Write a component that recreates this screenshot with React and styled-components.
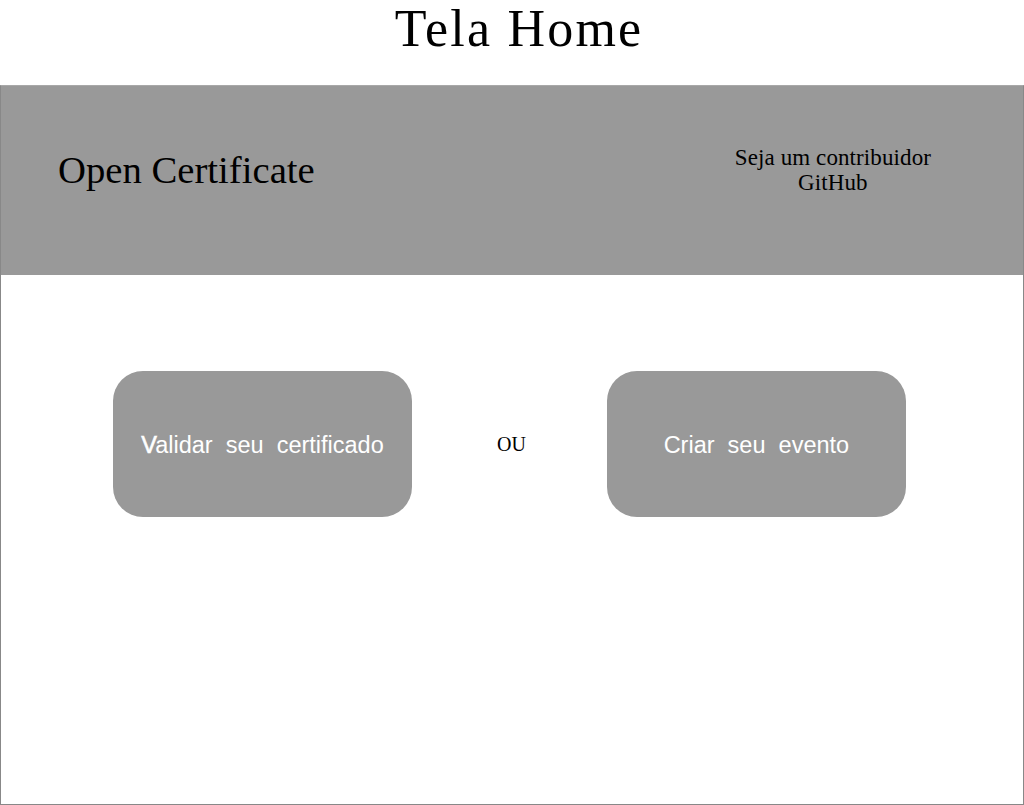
import styled, { createGlobalStyle } from "styled-components";

const GlobalStyle = createGlobalStyle`
  html, body {
    margin: 0;
    padding: 0;
    background: #ffffff;
  }
  body {
    font-family: "Liberation Serif", "Times New Roman", serif;
    color: #000;
  }
`;

const Page = styled.div`
  width: 1024px;
  height: 805px;
  display: flex;
  flex-direction: column;
  box-sizing: border-box;
`;

const PageTitle = styled.h1`
  margin: 0;
  height: 85px;
  font-size: 52px;
  letter-spacing: 2.2px;
  line-height: 58px;
  font-weight: 400;
  text-align: center;
  padding-left: 14px;
  box-sizing: border-box;
`;

const Frame = styled.div`
  flex: 1;
  border: 1px solid #888888;
  border-top-color: #a8a8a8;
  display: flex;
  flex-direction: column;
`;

const Header = styled.header`
  height: 189px;
  background: #999999;
  display: flex;
  align-items: center;
  justify-content: space-between;
  padding: 0 92px 22px 57px;
  box-sizing: border-box;
`;

const Brand = styled.div`
  font-size: 38.7px;
  line-height: 44px;
`;

const Contribute = styled.div`
  font-size: 23px;
  line-height: 25px;
  text-align: center;
  letter-spacing: 0.1px;
`;

const Actions = styled.main`
  display: flex;
  align-items: center;
  padding: 96px 0 0 112px;
`;

const ActionButton = styled.button`
  width: 299px;
  height: 146px;
  border: none;
  border-radius: 30px;
  background: #999999;
  color: #ffffff;
  font-family: "Liberation Sans", Arial, sans-serif;
  font-size: 23.5px;
  line-height: 28px;
  white-space: pre;
  padding: 2px 0 0;
  cursor: pointer;
`;

const FirstLetter = styled.span`
  -webkit-text-stroke: 0.6px #ffffff;
`;

const Separator = styled.span`
  font-size: 20px;
  margin: 0 81px 0 85px;
`;

export default function App() {
  return (
    <>
      <GlobalStyle />
      <Page>
        <PageTitle>Tela Home</PageTitle>
        <Frame>
          <Header>
            <Brand>Open Certificate</Brand>
            <Contribute>
              Seja um contribuidor
              <br />
              GitHub
            </Contribute>
          </Header>
          <Actions>
            <ActionButton>
              <FirstLetter>V</FirstLetter>
              {"alidar  seu  certificado"}
            </ActionButton>
            <Separator>OU</Separator>
            <ActionButton>{"Criar  seu  evento"}</ActionButton>
          </Actions>
        </Frame>
      </Page>
    </>
  );
}
